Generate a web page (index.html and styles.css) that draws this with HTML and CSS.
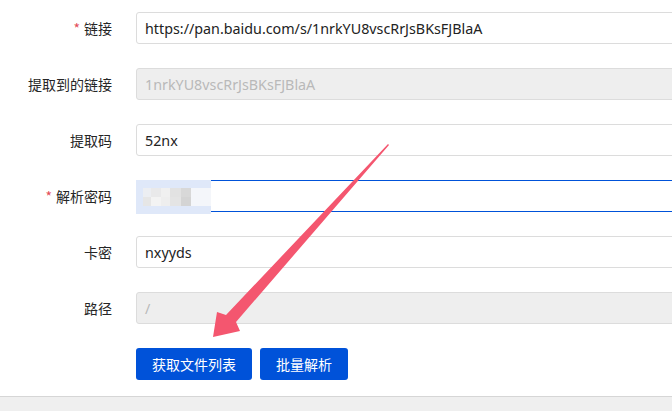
FILE: index.html
```html
<!DOCTYPE html>
<html lang="zh-CN">
<head>
<meta charset="utf-8">
<title>解析</title>
<link rel="stylesheet" href="styles.css">
</head>
<body>
<div class="page">
  <form class="form">
    <div class="row">
      <label class="label"><span class="req">*</span>链接</label>
      <div class="input">https://pan.baidu.com/s/1nrkYU8vscRrJsBKsFJBlaA</div>
    </div>
    <div class="row">
      <label class="label">提取到的链接</label>
      <div class="input disabled">1nrkYU8vscRrJsBKsFJBlaA</div>
    </div>
    <div class="row">
      <label class="label">提取码</label>
      <div class="input">52nx</div>
    </div>
    <div class="row">
      <label class="label"><span class="req">*</span>解析密码</label>
      <div class="input focused">
        <div class="blur">
          <div class="blur-inner">
            <span class="px p1"></span><span class="px p2"></span><span class="px p3"></span><span class="px p4"></span><span class="px p9"></span>
            <span class="px p5"></span><span class="px p6"></span><span class="px p7"></span><span class="px p8"></span><span class="px p10"></span>
          </div>
        </div>
      </div>
    </div>
    <div class="row">
      <label class="label">卡密</label>
      <div class="input">nxyyds</div>
    </div>
    <div class="row">
      <label class="label">路径</label>
      <div class="input disabled">/</div>
    </div>
    <div class="row actions">
      <span class="label"></span>
      <div class="buttons">
        <button type="button" class="btn wide">获取文件列表</button>
        <button type="button" class="btn">批量解析</button>
      </div>
    </div>
  </form>
  <div class="footer"></div>
  <svg class="arrow" width="672" height="411" viewBox="0 0 672 411">
    <polygon points="389,145 236,322 240,331 213,337 217,312 226,315 388,144" fill="#f4566f"/>
  </svg>
</div>
</body>
</html>
```

FILE: styles.css
```css
html, body {
  margin: 0;
  padding: 0;
  background: #ffffff;
  overflow: hidden;
}
.page {
  position: relative;
  width: 672px;
  height: 411px;
  overflow: hidden;
  font-family: "Noto Sans", "Noto Sans CJK SC", sans-serif;
  font-size: 14px;
  color: #222;
}
.form {
  display: flex;
  flex-direction: column;
  gap: 24px;
  padding-top: 12px;
  width: 760px;
}
.row {
  display: flex;
  align-items: center;
  gap: 24px;
  height: 32px;
}
.label {
  width: 112px;
  flex: none;
  text-align: right;
  font-family: "Noto Sans CJK SC", sans-serif;
  color: #262626;
}
.req {
  color: #e34d59;
  margin-right: 4px;
}
.input {
  flex: 1;
  height: 32px;
  box-sizing: border-box;
  border: 1px solid #dcdcdc;
  border-radius: 3px;
  padding: 0 8px;
  display: flex;
  align-items: center;
  color: #222;
  background: #fff;
  font-size: 14.3px;
}
.input.disabled {
  background: #eeeeee;
  color: #b9b9b9;
}
.input.focused {
  border: none;
  border-top: 1px solid #0052d9;
  border-bottom: 1px solid #0052d9;
  border-radius: 0;
  padding: 0;
  position: relative;
}
.blur {
  position: absolute;
  left: 0;
  top: -1px;
  width: 75px;
  height: 34px;
  background: #dfe8f9;
  display: flex;
  align-items: center;
  justify-content: flex-end;
  box-sizing: border-box;
}
.blur-inner {
  width: 68px;
  height: 18px;
  background: #f4f6fa;
  display: grid;
  grid-template-columns: 8px 10px 9px 11px 10px;
  grid-template-rows: 9px 9px;
}
.px { display: block; }
.p1 { background: #eceef2; }
.p2 { background: #e9e9ea; }
.p3 { background: #f0f0f0; }
.p4 { background: #e2e2e2; }
.p9 { background: #d8d8d8; }
.p5 { background: #e6e6e6; }
.p6 { background: #f3f3f3; }
.p7 { background: #eeeeee; }
.p8 { background: #e4e4e4; }
.p10 { background: #d4d4d4; }
.buttons {
  display: flex;
  gap: 8px;
}
.btn {
  height: 32px;
  border: none;
  border-radius: 3px;
  background: #0052d9;
  color: #fff;
  font-family: "Noto Sans CJK SC", sans-serif;
  font-size: 14px;
  padding: 0;
  width: 88px;
}
.btn.wide {
  width: 116px;
}
.footer {
  margin-top: 16px;
  height: 15px;
  border-top: 1px solid #d6d6d6;
  background: #efefef;
}
.arrow {
  position: absolute;
  left: 0;
  top: 0;
  pointer-events: none;
}
```
